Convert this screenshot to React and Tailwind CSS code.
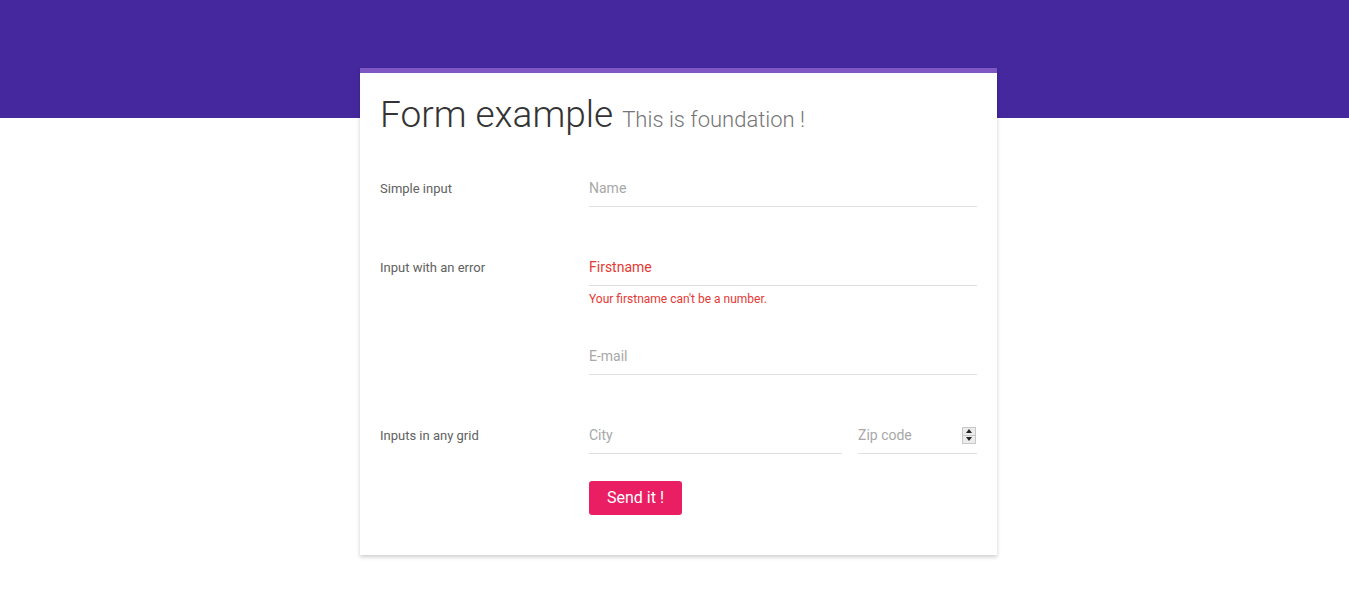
import React from "react";

function Field({ placeholder, className = "", error = false, value }) {
  return (
    <div className={"h-[37px] border-b border-[#e0e0e0] flex items-center " + className}>
      <span className={"text-[14px] " + (error ? "text-[#e53935]" : "text-[#a8a8a8]")}>{value || placeholder}</span>
    </div>
  );
}

export default function App() {
  return (
    <div className="min-h-[610px] bg-white relative" style={{ fontFamily: "Roboto, 'Liberation Sans', sans-serif" }}>
      <div className="h-[118px] bg-[#45289e]" />
      <div className="absolute left-[360px] top-[68px] w-[637px] bg-white border-t-[5px] border-[#7e57c2] shadow-[0_2px_4px_rgba(0,0,0,0.2)] px-5 pb-10">
        <h1 className="mt-[18px] leading-[48px] text-[#333] font-light flex items-baseline">
          <span className="text-[37px]">Form example</span>
          <span className="ml-[9px] text-[22px] text-[#757575] font-light">This is foundation !</span>
        </h1>

        <div className="flex mt-[26px]">
          <div className="w-[209px] h-[37px] flex items-center text-[13px] text-[#616161]">Simple input</div>
          <Field placeholder="Name" className="flex-1" />
        </div>

        <div className="flex mt-[42px]">
          <div className="w-[209px] h-[37px] flex items-center text-[13px] text-[#616161]">Input with an error</div>
          <div className="flex-1">
            <Field value="Firstname" error className="" />
            <div className="mt-[5px] text-[12px] leading-[16px] text-[#e53935]">Your firstname can't be a number.</div>
          </div>
        </div>

        <div className="flex mt-[31px]">
          <div className="w-[209px]" />
          <Field placeholder="E-mail" className="flex-1" />
        </div>

        <div className="flex mt-[42px]">
          <div className="w-[209px] h-[37px] flex items-center text-[13px] text-[#616161]">Inputs in any grid</div>
          <div className="flex-1 flex gap-4">
            <Field placeholder="City" className="flex-1" />
            <div className="w-[119px] h-[37px] border-b border-[#e0e0e0] flex items-center justify-between">
              <span className="text-[14px] text-[#a8a8a8]">Zip code</span>
              <div className="w-[14px] h-[17px] border border-[#c8c8c8] bg-[#ececec] flex flex-col mr-[1px]">
                <div className="flex-1 flex items-center justify-center border-b border-[#c8c8c8]">
                  <svg width="6" height="4" viewBox="0 0 6 4"><path d="M3 0L6 4H0z" fill="#222" /></svg>
                </div>
                <div className="flex-1 flex items-center justify-center">
                  <svg width="6" height="4" viewBox="0 0 6 4"><path d="M0 0H6L3 4z" fill="#222" /></svg>
                </div>
              </div>
            </div>
          </div>
        </div>

        <div className="flex mt-[27px]">
          <div className="w-[209px]" />
          <button className="h-[34px] w-[93px] rounded-[3px] bg-[#e91e63] text-white text-[16px]">Send it !</button>
        </div>
      </div>
    </div>
  );
}
